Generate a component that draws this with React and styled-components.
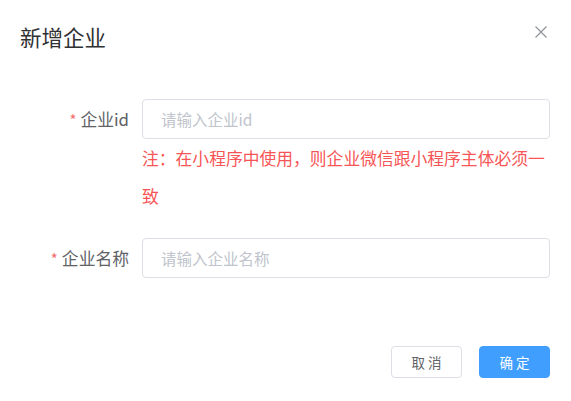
import React from 'react';
import styled, { createGlobalStyle } from 'styled-components';

const GlobalStyle = createGlobalStyle`
  html, body {
    margin: 0;
    padding: 0;
    background: #fff;
  }
  body {
    font-family: 'Noto Sans CJK SC', 'Noto Sans', 'Liberation Sans', sans-serif;
  }
`;

const Dialog = styled.div`
  width: 571px;
  height: 401px;
  box-sizing: border-box;
  background: #fff;
  display: flex;
  flex-direction: column;
`;

const Header = styled.div`
  display: flex;
  align-items: flex-start;
  justify-content: space-between;
  padding: 24px 20px 0 20px;
`;

const Title = styled.span`
  font-size: 21.5px;
  line-height: 26px;
  color: #303133;
`;

const CloseButton = styled.button`
  border: none;
  background: transparent;
  padding: 0;
  margin-top: 1px;
  margin-right: 3px;
  width: 14px;
  height: 14px;
  display: flex;
  align-items: center;
  justify-content: center;
  cursor: pointer;
`;

const Body = styled.div`
  padding: 49px 21px 0 20px;
`;

const FormItem = styled.div`
  display: flex;
  align-items: flex-start;
  margin-bottom: 22px;
`;

const Label = styled.label`
  width: 122px;
  box-sizing: border-box;
  padding-right: 13px;
  text-align: right;
  font-size: 16.8px;
  line-height: 40px;
  color: #606266;
  white-space: nowrap;
`;

const Required = styled.span`
  color: #f56c6c;
  margin-right: 4px;
  font-size: 15px;
`;

const Field = styled.div`
  flex: 1;
  display: flex;
  flex-direction: column;
`;

const Input = styled.input`
  height: 40px;
  box-sizing: border-box;
  width: 100%;
  border: 1px solid #dcdfe6;
  border-radius: 4px;
  padding: 0 18px;
  font-family: inherit;
  font-size: 15.5px;
  color: #606266;
  outline: none;

  &::placeholder {
    color: #c0c4cc;
  }
`;

const Tip = styled.div`
  color: #f75555;
  font-size: 16.8px;
  line-height: 38px;
  margin-bottom: 1px;
`;

const Footer = styled.div`
  margin-top: auto;
  display: flex;
  justify-content: flex-end;
  gap: 17px;
  padding: 0 21px 23px 20px;
`;

const Button = styled.button`
  width: 71px;
  height: 32px;
  box-sizing: border-box;
  border-radius: 4px;
  font-family: inherit;
  font-size: 13.5px;
  cursor: pointer;
  border: 1px solid ${(p) => (p.$primary ? '#409eff' : '#dcdfe6')};
  background: ${(p) => (p.$primary ? '#409eff' : '#fff')};
  color: ${(p) => (p.$primary ? '#fff' : '#606266')};
`;

const CloseIcon = () => (
  <svg width="12" height="12" viewBox="0 0 12 12">
    <path d="M0.5 0.5 L11.5 11.5 M11.5 0.5 L0.5 11.5" stroke="#909399" strokeWidth="1.2" fill="none" />
  </svg>
);

export default function App() {
  return (
    <>
      <GlobalStyle />
      <Dialog>
        <Header>
          <Title>新增企业</Title>
          <CloseButton aria-label="close">
            <CloseIcon />
          </CloseButton>
        </Header>
        <Body>
          <FormItem>
            <Label>
              <Required>*</Required>企业id
            </Label>
            <Field>
              <Input placeholder="请输入企业id" />
              <Tip>注：在小程序中使用，则企业微信跟小程序主体必须一致</Tip>
            </Field>
          </FormItem>
          <FormItem>
            <Label>
              <Required>*</Required>企业名称
            </Label>
            <Field>
              <Input placeholder="请输入企业名称" />
            </Field>
          </FormItem>
        </Body>
        <Footer>
          <Button>取 消</Button>
          <Button $primary>确 定</Button>
        </Footer>
      </Dialog>
    </>
  );
}
